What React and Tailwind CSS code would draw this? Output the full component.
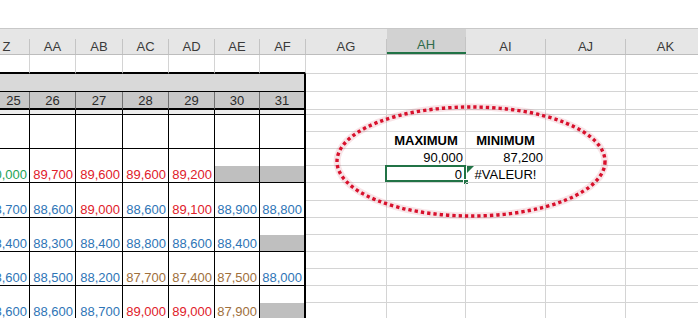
import React from "react";

const W = [46, 46, 47, 46, 46, 45, 46, 81, 79, 80, 80, 80];
const COLS = ["Z", "AA", "AB", "AC", "AD", "AE", "AF", "AG", "AH", "AI", "AJ", "AK"];
const DAYS = ["25", "26", "27", "28", "29", "30", "31"];
const R = "#e0202a";
const B = "#2e75b6";
const N = "#a0703c";
const G = "#22a455";

const BLOCKS = [
  null,
  [["90,000", G], ["89,700", R], ["89,600", R], ["89,600", R], ["89,200", R], "g", "g"],
  [["88,700", B], ["88,600", B], ["89,000", R], ["88,600", B], ["89,100", R], ["88,900", B], ["88,800", B]],
  [["88,400", B], ["88,300", B], ["88,400", B], ["88,800", B], ["88,600", B], ["88,400", B], "g"],
  [["88,600", B], ["88,500", B], ["88,200", B], ["87,700", N], ["87,400", N], ["87,500", N], ["88,000", B]],
  [["88,600", B], ["88,600", B], ["88,700", B], ["89,000", R], ["89,000", R], ["87,900", N], "g"],
];

const DATA_H = [17, 17, 17, 17, 18, 17, 17, 17, 17, 17, 17, 17];

function HeaderRow() {
  return (
    <div className="flex h-[27px] border-t border-t-[#c8c8c8] border-b border-b-[#bdbdbd] bg-[#e6e6e6]">
      {COLS.map((c, i) => {
        const sel = c === "AH";
        return (
          <div
            key={c}
            style={{ width: W[i] }}
            className={
              sel
                ? "flex shrink-0 items-end bg-[#d2d2d2] border-b-2 border-b-[#217346]"
                : "flex shrink-0 items-end"
            }
          >
            <div
              className={
                sel
                  ? "flex-1 text-center leading-[15px] text-[#2f6b4c]"
                  : "flex-1 text-center leading-[15px] text-[#3a3a3a]"
              }
            >
              {c}
            </div>
            <div className="w-px h-[15px] bg-[#c4c4c4]" />
          </div>
        );
      })}
    </div>
  );
}

function LightCell({ i, className = "", children }) {
  return (
    <div
      style={{ width: W[i] }}
      className={
        "relative flex shrink-0 items-center border-r border-r-[#d4d4d4] border-b border-b-[#d4d4d4] " +
        className
      }
    >
      {children}
    </div>
  );
}

function RightCells({ row }) {
  const out = [];
  for (let i = 7; i < 12; i++) {
    let content = null;
    let cls = "";
    if (row === 1 && i === 8) {
      content = <div className="flex-1 text-center font-bold leading-[15px] text-black">MAXIMUM</div>;
    } else if (row === 1 && i === 9) {
      content = <div className="flex-1 text-center font-bold leading-[15px] text-black">MINIMUM</div>;
    } else if (row === 2 && i === 8) {
      content = <div className="flex-1 text-right pr-[2px] leading-[15px] text-black">90,000</div>;
    } else if (row === 2 && i === 9) {
      content = <div className="flex-1 text-right pr-[2px] leading-[15px] text-black">87,200</div>;
    } else if (row === 3 && i === 8) {
      content = (
        <>
          <div className="flex-1 text-right pr-[3px] leading-[15px] text-black">0</div>
          <div className="absolute -left-[2px] -top-px -right-px bottom-0 border-2 border-[#217346]" />
          <div className="absolute -right-[4px] -bottom-[3px] w-[6px] h-[6px] bg-[#217346] border border-white" />
        </>
      );
    } else if (row === 3 && i === 9) {
      content = (
        <>
          <svg className="absolute left-px top-0" width="7" height="7" viewBox="0 0 7 7">
            <polygon points="0,0 7,0 0,7" fill="#217346" />
          </svg>
          <div className="flex-1 text-center leading-[15px] text-black">#VALEUR!</div>
        </>
      );
    }
    out.push(
      <LightCell key={i} i={i} className={cls}>
        {content}
      </LightCell>
    );
  }
  return out;
}

function App() {
  const tableW = W.slice(0, 7).reduce((a, b) => a + b, 0);
  return (
    <div className="relative w-[698px] h-[318px] overflow-hidden bg-white text-[13px] font-['Liberation_Sans',Arial,sans-serif]">
      <div className="h-[28px] bg-white" />
      <div className="ml-[-16px] w-[722px]">
        <HeaderRow />

        {/* R1 above table */}
        <div className="flex h-[19px]">
          {W.slice(0, 7).map((w, i) => (
            <div
              key={i}
              style={{ width: w }}
              className="shrink-0 border-r border-r-[#d4d4d4] border-b-2 border-b-black"
            />
          ))}
          <RightCells row={-1} />
        </div>

        {/* R2 merged grey band */}
        <div className="flex h-[18px]">
          <div
            style={{ width: tableW }}
            className="shrink-0 bg-[#d9d9d9] border-r-2 border-r-black border-b border-b-black"
          />
          <RightCells row={-2} />
        </div>

        {/* R3 day numbers */}
        <div className="flex h-[18px]">
          {DAYS.map((d, i) => (
            <div
              key={d}
              style={{ width: W[i] }}
              className={
                i === 6
                  ? "flex shrink-0 items-center justify-center bg-[#c8c8c8] border-r-2 border-r-black border-b-2 border-b-black text-[#2a2a2a] leading-[15px]"
                  : "flex shrink-0 items-center justify-center bg-[#c8c8c8] border-r border-r-[#707070] border-b-2 border-b-black text-[#2a2a2a] leading-[15px]"
              }
            >
              {i === 0 ? <span className="pl-[14px]">{d}</span> : d}
            </div>
          ))}
          <RightCells row={-3} />
        </div>

        {/* R4 thin strip */}
        <div className="flex h-[5px]">
          {W.slice(0, 7).map((w, i) => (
            <div
              key={i}
              style={{ width: w }}
              className={
                i === 6
                  ? "shrink-0 bg-[#ececec] border-r-2 border-r-black border-b border-b-black"
                  : "shrink-0 bg-[#ececec] border-r border-r-black border-b border-b-black"
              }
            />
          ))}
          <RightCells row={-4} />
        </div>

        {/* data rows */}
        {DATA_H.map((h, r) => {
          const isVal = r % 2 === 1;
          const block = BLOCKS[Math.floor(r / 2)];
          return (
            <div key={r} className="flex" style={{ height: h }}>
              {W.slice(0, 7).map((w, i) => {
                const v = isVal && block ? block[i] : null;
                const gray = v === "g";
                let cls = "flex shrink-0 items-center justify-end overflow-hidden ";
                cls += i === 6 ? "border-r-2 border-r-black " : "border-r border-r-black ";
                cls += isVal ? "border-b border-b-black " : "";
                cls += gray ? "bg-[#bfbfbf]" : "bg-white";
                return (
                  <div key={i} style={{ width: w }} className={cls}>
                    {v && !gray ? (
                      <span className="pr-[2px] leading-[15px] whitespace-nowrap" style={{ color: v[1] }}>
                        {v[0]}
                      </span>
                    ) : null}
                  </div>
                );
              })}
              <RightCells row={r} />
            </div>
          );
        })}
      </div>

      <svg
        className="absolute left-0 top-0 pointer-events-none"
        width="698"
        height="318"
        viewBox="0 0 698 318"
      >
        <ellipse
          cx="471"
          cy="161.5"
          rx="134"
          ry="54.5"
          fill="none"
          stroke="rgba(200,30,60,0.12)"
          strokeWidth="7"
        />
        <ellipse
          cx="471"
          cy="161.5"
          rx="134"
          ry="54.5"
          fill="none"
          stroke="#d8102c"
          strokeWidth="3.4"
          strokeDasharray="3.3 3"
        />
      </svg>
    </div>
  );
}

export default App;
